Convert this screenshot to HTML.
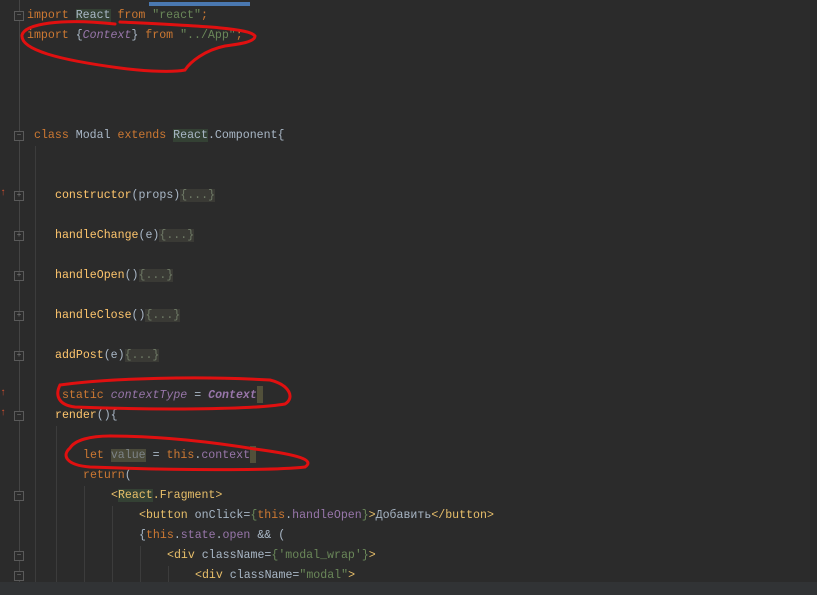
<!DOCTYPE html><html><head><meta charset="utf-8"><style>
body{margin:0;width:817px;height:595px;background:#2b2b2b;overflow:hidden;position:relative;font-family:"Liberation Mono","DejaVu Sans Mono",monospace;font-size:11.6px}
.l{position:absolute;white-space:pre;height:20px;line-height:20px;color:#a9b7c6}
.k{color:#cc7832}.s{color:#6a8759}.p{color:#9876aa;font-style:italic}.m{color:#ffc66d}.f{background:#3a3a35;color:#6f7a66}.h{background:#344134}.hv{background:#4a4a3a;color:#7d8387}.t{color:#e8bf6a}.c{background:#52503a;display:inline-block;width:6px;height:17px;vertical-align:middle}
.g{position:absolute;width:1px;background:#3c3c3c}
.fold{position:absolute;left:14px;width:8px;height:8px;border:1px solid #5a5a5a;color:#777;font-size:8px;line-height:8px;text-align:center;background:#2b2b2b}
</style></head><body>
<div style="position:absolute;left:149px;top:2px;width:101px;height:4px;background:#4a78b0"></div>
<div class="g" style="left:19px;top:0;height:582px;background:#444"></div>
<div class="g" style="left:35px;top:146px;height:436px"></div>
<div class="g" style="left:56px;top:426px;height:156px"></div>
<div class="g" style="left:84px;top:486px;height:96px"></div>
<div class="g" style="left:112px;top:506px;height:76px"></div>
<div class="g" style="left:140px;top:546px;height:36px"></div>
<div class="g" style="left:168px;top:566px;height:16px"></div>
<div class="fold" style="top:11px">−</div>
<div class="fold" style="top:131px">−</div>
<div class="fold" style="top:191px">+</div>
<div class="fold" style="top:231px">+</div>
<div class="fold" style="top:271px">+</div>
<div class="fold" style="top:311px">+</div>
<div class="fold" style="top:351px">+</div>
<div class="fold" style="top:411px">−</div>
<div class="fold" style="top:491px">−</div>
<div class="fold" style="top:551px">−</div>
<div class="fold" style="top:571px">−</div>
<div style="position:absolute;left:0;top:188px;color:#d05030;font-size:10px">↑</div>
<div style="position:absolute;left:0;top:388px;color:#d05030;font-size:10px">↑</div>
<div style="position:absolute;left:0;top:408px;color:#d05030;font-size:10px">↑</div>
<div class="l" style="left:27px;top:6px"><span class="k">import </span><span class="h">React</span><span class="k"> from </span><span class="s">"react"</span><span class="k">;</span></div>
<div class="l" style="left:27px;top:26px"><span class="k">import </span>{<span class="p">Context</span>}<span class="k"> from </span><span class="s">"../App"</span><span class="k">;</span></div>
<div class="l" style="left:34px;top:126px"><span class="k">class </span>Modal <span class="k">extends </span><span class="h">React</span>.Component{</div>
<div class="l" style="left:55px;top:186px"><span class="m">constructor</span>(props)<span class="f">{...}</span></div>
<div class="l" style="left:55px;top:226px"><span class="m">handleChange</span>(e)<span class="f">{...}</span></div>
<div class="l" style="left:55px;top:266px"><span class="m">handleOpen</span>()<span class="f">{...}</span></div>
<div class="l" style="left:55px;top:306px"><span class="m">handleClose</span>()<span class="f">{...}</span></div>
<div class="l" style="left:55px;top:346px"><span class="m">addPost</span>(e)<span class="f">{...}</span></div>
<div class="l" style="left:62px;top:386px"><span class="k">static </span><span class="p">contextType</span> = <span class="p" style="font-weight:bold">Context</span><span class="c"></span></div>
<div class="l" style="left:55px;top:406px"><span class="m">render</span>(){</div>
<div class="l" style="left:83px;top:446px"><span class="k">let </span><span class="hv">value</span> = <span class="k">this</span>.<span style="color:#9876aa">context</span><span class="c"></span></div>
<div class="l" style="left:83px;top:466px"><span class="k">return</span>(</div>
<div class="l" style="left:111px;top:486px"><span class="t">&lt;</span><span class="t h">React</span><span class="t">.Fragment&gt;</span></div>
<div class="l" style="left:139px;top:506px"><span class="t">&lt;button </span>onClick=<span class="s">{</span><span class="k">this</span>.<span style="color:#9876aa">handleOpen</span><span class="s">}</span><span class="t">&gt;</span>Добавить<span class="t">&lt;/button&gt;</span></div>
<div class="l" style="left:139px;top:526px">{<span class="k">this</span>.<span style="color:#9876aa">state</span>.<span style="color:#9876aa">open</span> &amp;&amp; (</div>
<div class="l" style="left:167px;top:546px"><span class="t">&lt;div </span>className=<span class="s">{'modal_wrap'}</span><span class="t">&gt;</span></div>
<div class="l" style="left:195px;top:566px"><span class="t">&lt;div </span>className=<span class="s">"modal"</span><span class="t">&gt;</span></div>
<div style="position:absolute;left:0;top:582px;width:817px;height:13px;background:#313335"></div>
<svg style="position:absolute;left:0;top:0" width="817" height="595" fill="none" stroke="#e01010" stroke-width="3" stroke-linecap="round">
<path d="M115 24 C60 18 25 24 22 35 C20 50 60 60 120 68 C150 72 175 72 185 70 C190 62 205 50 225 46 C240 44 255 42 255 36 C250 28 200 26 120 22"/>
<path d="M60 385 C55 395 58 405 75 407 C150 410 250 410 285 404 C295 398 290 385 270 380 C200 376 110 378 60 385"/>
<path d="M70 448 C62 455 65 465 90 467 C170 470 270 471 305 467 C315 460 300 455 255 449 C200 440 150 436 110 436 C90 436 75 440 70 448"/>
</svg>
</body></html>
